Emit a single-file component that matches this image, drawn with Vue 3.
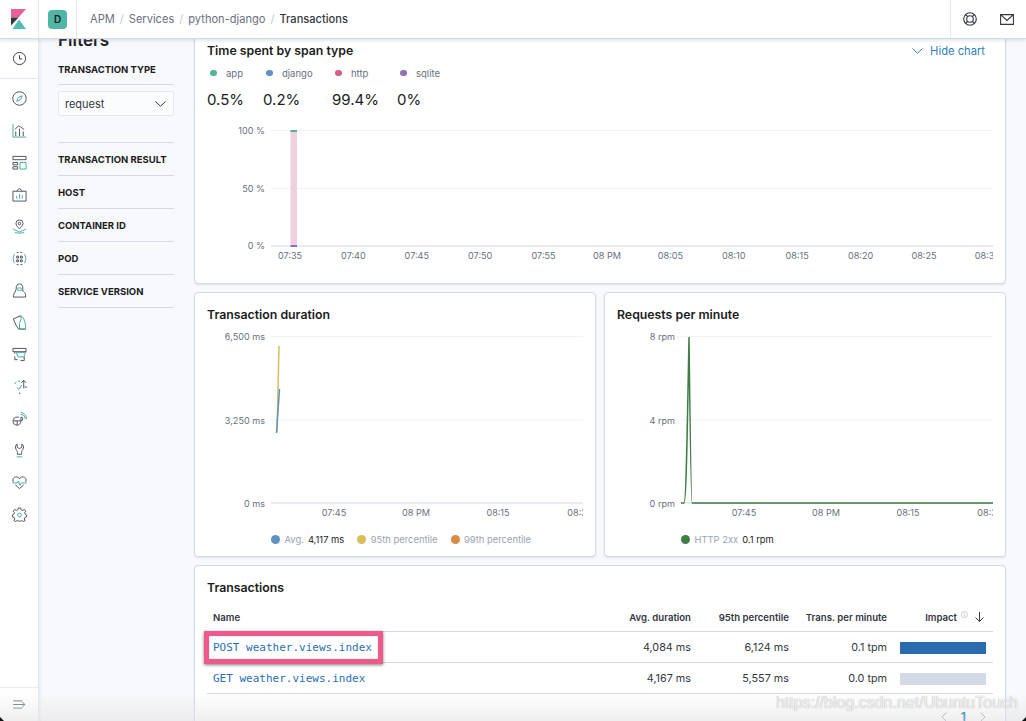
<script setup>
const navIcons = [
  { dark: 'M8 1.500a6.500 6.500 0 1 0 0 13 6.500 6.500 0 0 0 0-13zM8 4.500V8.500H11', teal: '' },
  { dark: 'M8 .8a7.200 7.200 0 1 0 0 14.400A7.200 7.200 0 0 0 8 .8z', teal: 'M11 5 9.200 9.200 5 11 6.800 6.800z' },
  { dark: 'M4 14V9M8 14V6M12 14V9M3 7 7 3 9 4 13 7', teal: 'M1 1V15H15' },
  { dark: 'M1 1.500H15V5H1zM1 8H6V10.500H1zM1 12.500H6V15H1z', teal: 'M8.500 8H15V15H8.500z' },
  { dark: 'M1 4.500H15V15H1zM5 4.500 8 1.200 11 4.500', teal: 'M5 12.500V9.500M8 12.500V7.500M11 12.500V8.500' },
  { dark: 'M8 1a3.800 3.800 0 0 1 3.800 3.800C11.800 7 9 9.500 8 10.500 7 9.500 4.200 7 4.200 4.800A3.800 3.800 0 0 1 8 1zM8 3.500a1.300 1.300 0 1 0 0 2.600 1.300 1.300 0 0 0 0-2.600z', teal: 'M1 10.500c2.500 1.800 4 1.800 7 3.500 3-1.700 4.500-1.700 7-3.500M3 14.500c2 .3 3.500 .3 5 .8 1.500-.5 3-.5 5-.8' },
  { dark: 'M5 1.500H7M9 1.500H11M5 14.500H7M9 14.500H11M5 5.500H7V7.500H5zM9 5.500H11V7.500H9zM5 9.500H7V11.500H5zM9 9.500H11V11.500H9z', teal: 'M3 3C.8 5.500 .8 10.500 3 13M13 3C15.200 5.500 15.200 10.500 13 13' },
  { dark: 'M8 1C5.500 1 4.500 2.800 4.500 5.500C4.500 7.500 3.500 9 1.500 13V15H14.500V12.500C14.500 10.500 12.500 9.500 11.500 8.500C11.500 7.500 11.500 6.500 11.500 5.500C11.500 2.800 10.500 1 8 1z', teal: 'M4.800 6.500C6 4.800 10 4.800 11.300 6.500C10 8.500 6 8.500 4.800 6.500z' },
  { dark: 'M8 1.500 1.500 4 4 10.500 7 15H14.500M7 1.500 10 1', teal: 'M10 1.200C13 3 14.500 8 14.500 15H8V9C9 7 9.800 4 10 1.200z' },
  { dark: 'M1 1.500H15V5H1zM3 5V7M3 10V13.500H6M13 10V14.500H9', teal: 'M4.500 6H14.500L12.500 10.500H6.500z' },
  { dark: 'M13.500 8.500A6 6 0 1 1 8 14.500M12.500 10V1.500M10 4 12.500 1.500 15 4', teal: 'M2.500 5.500 4.500 3M6.500 2.300 8.500 2.200M5 9 7.500 11 10.500 6.500' },
  { dark: 'M7.500 6.500H5.500a4.300 4.300 0 0 0 0 8.600c2.200 0 4-2 4-4.300V6.500a2 2 0 0 1 0 4M1.300 10.500H9.500M5.500 10.500V15', teal: 'M9 3.500a5 5 0 0 1 5 5M9 1.200a7.500 7.500 0 0 1 6.500 7.500' },
  { dark: 'M5.500 1.200C3.500 2 3 5 4.500 7C5.500 8.500 5.800 9 5.800 12H10.200C10.200 9 10.500 8.500 11.500 7C13 5 12.500 2 10.500 1.200V4.500L8 6 5.500 4.500z', teal: 'M5 14.800H11' },
  { dark: 'M8 14.500 3.500 10.500M8 14.500 12.500 10.500M1.500 7.500C0 4.500 2 2 4.500 2 6 2 7.200 2.800 8 4 8.800 2.800 10 2 11.500 2 14 2 16 4.500 14.500 7.500', teal: 'M.5 8.500H5.500L6.800 6.500 8.500 11 10 8.500H15.500' },
  { dark: 'M6.800 1H9.200L9.700 3 11.400 3.700 13.200 2.600 14.700 4.400 13.500 6 14.100 7.700 15.500 8.400V10.500L13.800 11 13 12.800 14 14.500 12 15.500 10.500 14.400 9 15H7L5.500 14.400 4 15.500 2 14.500 3 12.800 2.200 11 .5 10.500V8.400L1.900 7.700 2.500 6 1.300 4.400 2.800 2.600 4.600 3.700 6.300 3z', teal: 'M8 6.500a2 2 0 1 0 0 4 2 2 0 0 0 0-4z' }
]
const stats = [
  { label: 'app', value: '0.5%', color: '#54b399', width: 56 },
  { label: 'django', value: '0.2%', color: '#6092c0', width: 69 },
  { label: 'http', value: '99.4%', color: '#d36086', width: 65 },
  { label: 'sqlite', value: '0%', color: '#9170b8', width: 50 }
]
const filters = ['TRANSACTION RESULT', 'HOST', 'CONTAINER ID', 'POD', 'SERVICE VERSION']
const spanTicks = ['07:35', '07:40', '07:45', '07:50', '07:55', '08 PM', '08:05', '08:10', '08:15', '08:20', '08:25', '08:30']
const rows = [
  { name: 'POST weather.views.index', avg: '4,084 ms', p95: '6,124 ms', tpm: '0.1 tpm', impact: 100, marked: true },
  { name: 'GET weather.views.index', avg: '4,167 ms', p95: '5,557 ms', tpm: '0.0 tpm', impact: 0, marked: false }
]
</script>

<template>
  <div class="app">
    <header class="topbar">
      <div class="logo-cell">
        <svg width="15" height="20" viewBox="0 0 15 20">
          <path d="M0 0H15L7.500 8.500H0z" fill="#e8609a" />
          <path d="M0 8.500H7.500L0 16.500z" fill="#343741" />
          <path d="M1.500 20 8 10.500 15 20z" fill="#4fbdb0" />
        </svg>
      </div>
      <div class="space-cell"><span class="avatar">D</span></div>
      <nav class="crumbs">
        <span>APM</span><i>/</i><span>Services</span><i>/</i><span>python-django</span><i>/</i><b>Transactions</b>
      </nav>
      <div class="top-icon first">
        <svg width="14" height="14" viewBox="0 0 14 14" fill="none" stroke="#343741" stroke-width="1.100">
          <circle cx="7" cy="7" r="6.300" /><circle cx="7" cy="7" r="3.300" />
          <path d="M2.500 2.500 4.700 4.700M11.500 2.500 9.300 4.700M2.500 11.500 4.700 9.300M11.500 11.500 9.300 9.300" />
        </svg>
      </div>
      <div class="top-icon">
        <svg width="14" height="11" viewBox="0 0 14 11" fill="none" stroke="#343741" stroke-width="1.100">
          <path d="M.6.600H13.400V10.400H.6zM.6.600 7 6.500 13.400.6" />
        </svg>
      </div>
    </header>

    <div class="body">
      <aside class="rail">
        <div class="rail-top">
          <svg class="nav" viewBox="0 0 16 16" fill="none">
            <path :d="navIcons[0].dark" stroke="#343741" />
          </svg>
        </div>
        <div class="rail-list">
          <svg v-for="(icon, i) in navIcons.slice(1)" :key="i" class="nav" viewBox="0 0 16 16" fill="none">
            <path :d="icon.dark" stroke="#4a4d57" />
            <path :d="icon.teal" stroke="#3ea99a" />
          </svg>
        </div>
        <div class="rail-bottom">
          <svg width="13" height="9" viewBox="0 0 14 10" fill="none" stroke="#69707d" stroke-width="1.100">
            <path d="M0 1H10M0 5H13M0 9H10M10 2 13 5 10 8" />
          </svg>
        </div>
      </aside>

      <div class="page">
        <section class="filters">
          <h2 class="filters-title">Filters</h2>
          <h3 class="filter-name type">TRANSACTION TYPE</h3>
          <div class="select">
            <span>request</span>
            <svg width="11" height="6" viewBox="0 0 11 6" fill="none" stroke="#343741">
              <path d="M.5.500 5.500 5.200 10.500.5" />
            </svg>
          </div>
          <h3 v-for="name in filters" :key="name" class="filter-name">{{ name }}</h3>
        </section>

        <main class="cards">
          <section class="card span-card">
            <div class="title-row">
              <h2>Time spent by span type</h2>
              <a class="hide">
                <svg width="11" height="6" viewBox="0 0 11 6" fill="none" stroke="#2f7fc0">
                  <path d="M.5.500 5.500 5.200 10.500.5" />
                </svg>
                Hide chart
              </a>
            </div>
            <div class="stats">
              <div v-for="s in stats" :key="s.label" class="stat" :style="{ width: s.width + 'px' }">
                <div class="stat-label"><span class="dot small" :style="{ background: s.color }"></span>{{ s.label }}</div>
                <div class="stat-value">{{ s.value }}</div>
              </div>
            </div>
            <svg class="chart-span" width="786" height="150" viewBox="207 120 786 150">
              <g class="grid">
                <path d="M271 130.500H994M271 188.500H994" />
              </g>
              <path d="M271 246H994" class="base" />
              <rect x="290.500" y="130" width="6.500" height="116" fill="#f0d0dd" />
              <rect x="290.500" y="130" width="6.500" height="2" fill="#54b399" />
              <rect x="290.500" y="245" width="6.500" height="2" fill="#9170b8" />
              <g class="axis" text-anchor="end">
                <text x="265" y="134">100 %</text>
                <text x="265" y="192">50 %</text>
                <text x="265" y="249">0 %</text>
              </g>
              <g class="axis" text-anchor="middle">
                <text v-for="(t, i) in spanTicks" :key="t" :x="290 + i * 63.400" y="259">{{ t }}</text>
              </g>
            </svg>
          </section>

          <div class="pair">
            <section class="card chart-card">
              <h2>Transaction duration</h2>
              <svg class="chart-small" width="376" height="200" viewBox="207 325 376 200">
                <path d="M271 336.500H583M271 420H583" class="grid-line" />
                <path d="M271 503H583" class="base" />
                <path d="M279 346 277 432" stroke="#d6bf57" stroke-width="1.500" fill="none" />
                <path d="M279.500 389 276.500 433" stroke="#6092c0" stroke-width="1.500" fill="none" />
                <g class="axis" text-anchor="end">
                  <text x="265" y="340">6,500 ms</text>
                  <text x="265" y="423.500">3,250 ms</text>
                  <text x="265" y="507">0 ms</text>
                </g>
                <g class="axis" text-anchor="middle">
                  <text x="334" y="516">07:45</text>
                  <text x="416" y="516">08 PM</text>
                  <text x="498" y="516">08:15</text>
                  <text x="580" y="516">08:30</text>
                </g>
              </svg>
              <div class="legend">
                <span class="dot" style="background:#6092c0"></span><span class="muted">Avg.</span><span class="val">4,117 ms</span>
                <span class="dot gap" style="background:#d6bf57"></span><span class="muted">95th percentile</span>
                <span class="dot gap" style="background:#da8b45"></span><span class="muted">99th percentile</span>
              </div>
            </section>

            <section class="card chart-card">
              <h2>Requests per minute</h2>
              <svg class="chart-small" width="376" height="200" viewBox="617 325 376 200">
                <path d="M681 336.500H993M681 420H993" class="grid-line" />
                <path d="M681 503H993" class="base" />
                <path d="M681 503H684C686 503 687 450 689 337C690 420 691 503 692 503H993" stroke="#3f7d45" stroke-width="1.500" fill="none" />
                <g class="axis" text-anchor="end">
                  <text x="675" y="340">8 rpm</text>
                  <text x="675" y="423.500">4 rpm</text>
                  <text x="675" y="507">0 rpm</text>
                </g>
                <g class="axis" text-anchor="middle">
                  <text x="744" y="516">07:45</text>
                  <text x="826" y="516">08 PM</text>
                  <text x="908" y="516">08:15</text>
                  <text x="990" y="516">08:30</text>
                </g>
              </svg>
              <div class="legend">
                <span class="dot" style="background:#3f7d45"></span><span class="muted">HTTP 2xx</span><span class="val">0.1 rpm</span>
              </div>
            </section>
          </div>

          <section class="card table-card">
            <h2>Transactions</h2>
            <div class="table-head">
              <span class="name-col">Name</span>
              <span class="num">Avg. duration</span>
              <span class="num">95th percentile</span>
              <span class="num">Trans. per minute</span>
              <span class="impact-head">Impact
                <svg class="info" width="7" height="7" viewBox="0 0 8 8" fill="none" stroke="#b4bac6" stroke-width=".8"><circle cx="4" cy="4" r="3.500" /><path d="M4 3.500V6M4 2V2.800" /></svg>
                <svg class="arrow" width="9" height="10" viewBox="0 0 9 10" fill="none" stroke="#343741"><path d="M4.500 0V9.500M.5 5.500 4.500 9.500 8.500 5.500" /></svg>
              </span>
            </div>
            <div v-for="r in rows" :key="r.name" class="table-row">
              <a class="name-col link">{{ r.name }}</a>
              <span class="num">{{ r.avg }}</span>
              <span class="num">{{ r.p95 }}</span>
              <span class="num">{{ r.tpm }}</span>
              <span class="impact"><span class="bar" :class="{ full: r.impact > 0 }"></span></span>
              <span v-if="r.marked" class="marker"></span>
            </div>
            <div class="pager">
              <svg width="6" height="10" viewBox="0 0 6 10" fill="none" stroke="#98a2b3"><path d="M5.500.5 1 5 5.500 9.500" /></svg>
              <b>1</b>
              <svg width="6" height="10" viewBox="0 0 6 10" fill="none" stroke="#98a2b3"><path d="M.5.500 5 5 .5 9.500" /></svg>
            </div>
          </section>
        </main>
      </div>
    </div>

    <div class="fade"></div>
    <div class="watermark">https://blog.csdn.net/UbuntuTouch</div>
    <span class="corner left"></span>
    <span class="corner right"></span>
  </div>
</template>

<style>
html, body { margin: 0; background: #fff; overflow: hidden; }
</style>

<style scoped>
.app {
  position: relative;
  width: 1026px;
  height: 721px;
  overflow: hidden;
  display: flex;
  flex-direction: column;
  font-family: Inter, "Liberation Sans", sans-serif;
  color: #1a1c21;
  background: #f8f9fc;
}
h2, h3 { margin: 0; }

.topbar {
  position: relative;
  z-index: 3;
  flex: 0 0 39px;
  display: flex;
  align-items: center;
  background: #fff;
  border-bottom: 1px solid #d3dae6;
  box-shadow: 0 2px 3px rgba(152, 162, 179, .25);
  box-sizing: border-box;
}
.logo-cell { width: 39px; height: 100%; display: flex; justify-content: center; align-items: center; box-sizing: border-box; border-right: 1px solid #e3e8f0; padding-right: 1px; }
.space-cell { width: 38px; height: 100%; display: flex; justify-content: center; align-items: center; border-right: 1px solid #e3e8f0; box-sizing: border-box; }
.avatar { width: 19px; height: 19px; border-radius: 4px; background: #4fb5a5; display: flex; justify-content: center; align-items: center; font-size: 10px; font-weight: 600; color: #1a1c21; }
.crumbs { flex: 1; padding-left: 13px; display: flex; align-items: center; font-size: 11.100px; color: #69707d; }
.crumbs i { font-style: normal; margin: 0 5px; color: #c2c9d6; }
.crumbs b { font-weight: 500; color: #343741; }
.top-icon { width: 38px; height: 100%; display: flex; justify-content: center; align-items: center; box-sizing: border-box; }
.top-icon.first { border-left: 1px solid #e3e8f0; }

.body { flex: 1; min-height: 0; display: flex; }
.rail {
  flex: 0 0 39px;
  background: #fff;
  border-right: 1px solid #e3e8f0;
  box-shadow: 1px 0 3px rgba(152, 162, 179, .2);
  box-sizing: border-box;
  display: flex;
  flex-direction: column;
  position: relative;
  z-index: 2;
}
.nav { width: 15px; height: 15px; display: block; flex: none; }
.rail-top { height: 40px; display: flex; justify-content: center; align-items: center; border-bottom: 1px solid #e3e8f0; box-sizing: border-box; }
.rail-list { flex: 1; padding-top: 11.500px; display: flex; flex-direction: column; align-items: center; gap: 17px; }
.rail-bottom { flex: none; height: 34px; display: flex; justify-content: center; align-items: center; border-top: 1px solid #e9ecf2; box-sizing: border-box; }

.page { flex: 1; min-width: 0; display: flex; overflow: hidden; background: #f8f9fc; }
.filters { flex: 0 0 116px; margin: -12px 20px 0 19px; }
.filters-title { font-size: 17px; font-weight: 600; line-height: 26px; height: 24px; margin-bottom: 4px; color: #1a1c21; }
.filter-name {
  font-size: 9.500px;
  font-weight: 700;
  height: 33px;
  line-height: 34px;
  box-sizing: border-box;
  border-bottom: 1px solid #d3dae6;
  color: #1a1c21;
  white-space: nowrap;
}
.filter-name.type { height: 30px; line-height: 30px; }
.select {
  margin: 6px 0 26px;
  height: 25px;
  box-sizing: border-box;
  display: flex;
  justify-content: space-between;
  align-items: center;
  padding: 0 7px 0 6px;
  background: #fbfcfd;
  border: 1px solid #e4e8f0;
  border-radius: 2px;
  font-size: 11px;
  color: #343741;
}
.select + .filter-name { border-top: 1px solid #d3dae6; height: 34px; }

.cards { flex: 0 0 812px; margin-top: -7px; display: flex; flex-direction: column; gap: 8px; }
.card {
  background: #fff;
  border: 1px solid #d3dae6;
  border-radius: 4px;
  box-shadow: 0 1px 2px rgba(152, 162, 179, .25);
  box-sizing: border-box;
  padding: 12px;
}
.card h2 { font-size: 12.300px; font-weight: 600; line-height: 20px; height: 18px; color: #1a1c21; }
.span-card { flex: none; height: 252px; padding-top: 8px; }
.title-row { display: flex; justify-content: space-between; align-items: flex-start; padding-right: 8px; height: 18px; }
.hide { font-size: 11.200px; line-height: 20px; color: #2f7fc0; display: flex; align-items: center; gap: 7px; }
.stats { display: flex; margin-top: 5px; }
.stat-label { display: flex; align-items: center; font-size: 9.500px; color: #69707d; height: 18px; }
.stat-value { font-size: 15px; color: #1a1c21; line-height: 20px; margin-top: 8px; }
.dot { width: 9px; height: 9px; border-radius: 50%; display: inline-block; flex: none; }
.dot.small { width: 6.500px; height: 6.500px; margin: 0 9.500px 0 3px; }
.chart-span { display: block; margin-top: 10px; }
.chart-small { display: block; overflow: hidden; margin-top: 2px; }
.grid path, .grid-line { stroke: #f0f2f6; stroke-width: 1; fill: none; }
.base { stroke: #e0e4ec; stroke-width: 1.500; fill: none; }
.axis text { font-family: Inter, "Liberation Sans", sans-serif; font-size: 9.100px; fill: #69707d; }

.pair { flex: none; display: flex; gap: 8px; }
.chart-card { flex: 1; height: 265px; }
.legend { display: flex; align-items: center; padding-left: 64px; font-size: 9.400px; margin-top: 5px; height: 18px; }
.legend .dot { margin-right: 4.500px; }
.legend .dot.gap { margin-left: 13px; }
.muted { color: #98a2b3; }
.val { margin-left: 4px; color: #1a1c21; }

.table-card { flex: 1; margin-bottom: -40px; }
.table-head, .table-row {
  position: relative;
  display: grid;
  grid-template-columns: 1fr 98px 98px 98px 106px;
  align-items: center;
  box-sizing: border-box;
  border-bottom: 1px solid #d3dae6;
}
.table-head { height: 35px; margin-top: 1px; padding-top: 6px; font-size: 9.600px; font-weight: 600; color: #343741; }
.table-row { height: 31px; padding-top: 1px; font-size: 10.800px; color: #343741; }
.name-col { padding-left: 6px; }
.link { font-family: "DejaVu Sans Mono", "Liberation Mono", monospace; font-size: 11px; color: #2a6fb3; }
.num { text-align: right; white-space: nowrap; }
.impact-head { display: flex; align-items: center; justify-content: flex-end; padding-right: 9px; }
.info { margin: -5px 7px 0 4px; }
.impact { padding: 0 7px 0 13px; }
.bar { display: block; height: 12px; background: #d3dae6; }
.bar.full { background: #2b6cb0; }
.marker {
  position: absolute;
  left: -3px;
  top: -1px;
  width: 179px;
  height: 33px;
  box-sizing: border-box;
  border: 5.500px solid #ee5a8a;
  box-shadow: 0 1px 3px rgba(0, 0, 0, .5), inset 0 0 1px rgba(0, 0, 0, .5);
}
.pager { display: flex; justify-content: flex-end; align-items: center; gap: 14px; padding: 15px 7px 0 0; font-size: 12px; color: #006bb4; }
.pager b { font-weight: 700; }

.fade {
  position: absolute;
  left: 0; right: 0; bottom: 0;
  height: 28px;
  z-index: 4;
  pointer-events: none;
  background: linear-gradient(rgba(225, 225, 225, 0), rgba(225, 225, 225, .55));
}
.watermark {
  position: absolute;
  z-index: 5;
  left: 776px;
  top: 692px;
  font-family: "Liberation Sans", sans-serif;
  font-size: 16px;
  line-height: 22px;
  white-space: nowrap;
  color: rgba(255, 255, 255, .85);
  text-shadow: 0 0 1px rgba(90, 90, 90, .65);
}
.corner { position: absolute; z-index: 6; bottom: 0; width: 4px; height: 4px; background: #111; }
.corner.left { left: 0; clip-path: polygon(0 0, 100% 100%, 0 100%); }
.corner.right { right: 0; clip-path: polygon(100% 0, 100% 100%, 0 100%); }
</style>
